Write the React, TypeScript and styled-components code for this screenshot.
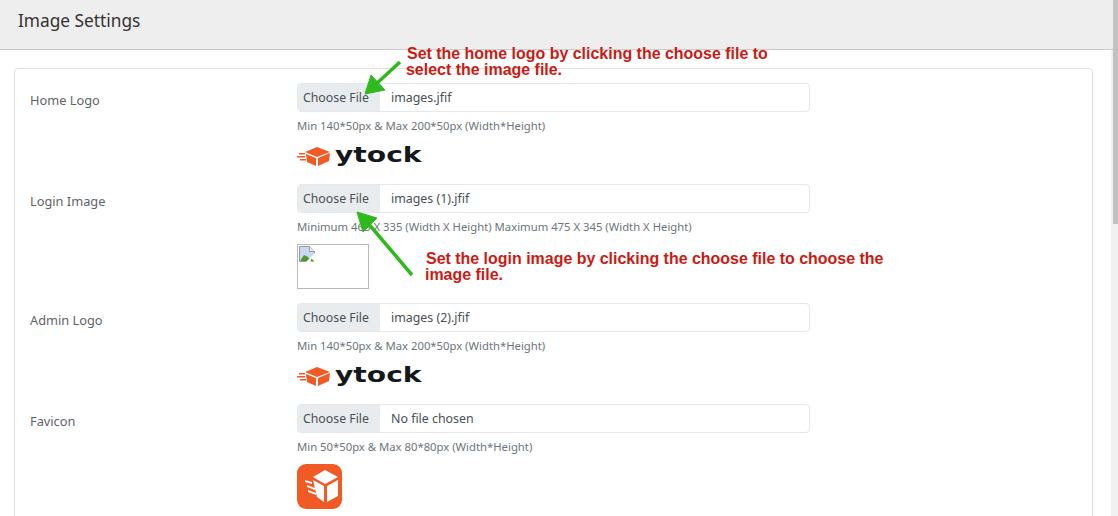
import styled, { createGlobalStyle } from "styled-components";

const GlobalStyle = createGlobalStyle`
  html, body {
    margin: 0;
    padding: 0;
    height: 100%;
    overflow: hidden;
    background: #f1f1f1;
    font-family: "Noto Sans", "Open Sans", sans-serif;
  }
`;

const Page = styled.div`
  position: relative;
  height: 516px;
  overflow: hidden;
  background: #f1f1f1;
`;

const ScrollThumb = styled.div`
  position: absolute;
  top: 0;
  right: 0;
  width: 5px;
  height: 224px;
  background: #c1c1c1;
`;

const Header = styled.header`
  height: 49px;
  display: flex;
  align-items: center;
  margin-right: 5px;
  padding: 0 0 8px 18px;
  box-sizing: border-box;
  background: #eeeeee;
  box-shadow: 0 1px 0 #cccccc;
`;

const Title = styled.h1`
  margin: 0;
  font-size: 17.3px;
  font-weight: 400;
  line-height: 22px;
  color: #333333;
`;

const Body = styled.main`
  margin-top: 1px;
  margin-right: 7px;
  padding: 18px 18px 18px 14px;
  height: 1100px;
  background: #ffffff;
`;

const Card = styled.section`
  box-sizing: border-box;
  height: 100%;
  padding: 14px 15px;
  background: #ffffff;
  border: 1px solid #dfdfdf;
  border-radius: 4px;
`;

const Row = styled.div`
  display: grid;
  grid-template-columns: 267px 513px;
  padding-bottom: 14px;
`;

const FieldLabel = styled.label`
  padding-top: 6.5px;
  font-size: 12.8px;
  line-height: 20px;
  color: #5f6468;
`;

const FileField = styled.div`
  box-sizing: border-box;
  display: flex;
  align-items: center;
  height: 29px;
  border: 1px solid #e6e8ea;
  border-radius: 4px;
  overflow: hidden;
`;

const ChooseButton = styled.span`
  align-self: stretch;
  display: flex;
  align-items: center;
  width: 83px;
  box-sizing: border-box;
  padding-left: 6px;
  margin: -1px 0 -1px -1px;
  background: #e9ecef;
  font-size: 12.3px;
  color: #495057;
`;

const FileName = styled.span`
  padding-left: 11px;
  font-size: 12.4px;
  color: #495057;
`;

const Hint = styled.p`
  margin: 0;
  height: 31px;
  padding-top: 7px;
  box-sizing: border-box;
  font-size: 11.3px;
  line-height: 14px;
  color: #6c757d;
  white-space: nowrap;
`;

const LogoWrap = styled.div`
  display: flex;
  align-items: flex-start;
  height: 27px;
  padding-top: 3px;
  box-sizing: border-box;
`;

const LogoText = styled.span`
  display: inline-block;
  margin: -5px 0 0 4px;
  font-family: "DejaVu Sans", sans-serif;
  font-size: 22px;
  font-weight: 700;
  line-height: 28px;
  color: #15181b;
  transform: scaleX(1.28);
  transform-origin: left center;
`;

const BrokenFrame = styled.div`
  box-sizing: border-box;
  width: 72px;
  height: 45px;
  padding: 1px 0 0 1px;
  border: 1px solid #b9b9b9;
  line-height: 0;
`;

const FaviconBox = styled.div`
  width: 45px;
  height: 45px;
  background: #f15a25;
  border-radius: 9px;
  line-height: 0;
`;

const Callout = styled.div<{ $left: number; $top: number }>`
  position: absolute;
  left: ${(p) => p.$left}px;
  top: ${(p) => p.$top}px;
  font-family: "Liberation Sans", Arial, sans-serif;
  font-size: 15.96px;
  font-weight: 700;
  line-height: 15.5px;
  color: #cc1a12;
  white-space: nowrap;
`;

const SecondLine = styled.span`
  display: block;
  margin-left: -1px;
`;

const ArrowLayer = styled.svg`
  position: absolute;
  left: 0;
  top: 0;
  width: 1118px;
  height: 516px;
  pointer-events: none;
`;

function Cube() {
  return (
    <svg width="34" height="21" viewBox="0 0 34 21">
      <g fill="#f15a25">
        <polygon points="20,1 33,6 20,11 8,6" />
        <polygon points="9,8 19,12 19,20 10,16" />
        <polygon points="21,12 33,7 32,15 21,20" />
        <rect x="2" y="7" width="6" height="1.5" />
        <rect x="0" y="10" width="8" height="1.5" />
        <rect x="3" y="13" width="6" height="1.5" />
      </g>
    </svg>
  );
}

function LogoImage() {
  return (
    <LogoWrap>
      <Cube />
      <LogoText>ytock</LogoText>
    </LogoWrap>
  );
}

function BrokenIcon() {
  return (
    <svg width="16" height="16" viewBox="0 0 16 16">
      <path d="M.5.5h10l5 5v10H.5z" fill="#c9d8f5" stroke="#9a9a9a" />
      <path d="M10.5.5v5h5" fill="#eeeeee" stroke="#9a9a9a" />
      <path d="M1 15l4-6 4 2 3 4z" fill="#4c9a2a" />
      <path d="M16 7L7 16h9z" fill="#ffffff" />
      <path d="M12.5 12.5l3 3h-4z" fill="#4c9a2a" />
    </svg>
  );
}

function FaviconImage() {
  return (
    <FaviconBox>
      <svg width="45" height="45" viewBox="0 0 45 45">
        <g fill="#ffffff">
          <polygon points="28,6 41,13 28,20 16,13" />
          <polygon points="16,16 27,22 27,38 20,33" />
          <polygon points="30,22 41,16 41,32 30,38" />
          <polygon points="8,16 15,18 15,20 8,18" />
          <polygon points="10,21 18,24 18,26 10,23" />
          <polygon points="11,26 19,29 19,31 11,28" />
        </g>
      </svg>
    </FaviconBox>
  );
}

type Field = {
  label: string;
  file: string;
  hint: string;
  preview: React.ReactNode;
};

const fields: Field[] = [
  {
    label: "Home Logo",
    file: "images.jfif",
    hint: "Min 140*50px & Max 200*50px (Width*Height)",
    preview: <LogoImage />,
  },
  {
    label: "Login Image",
    file: "images (1).jfif",
    hint: "Minimum 465 X 335 (Width X Height) Maximum 475 X 345 (Width X Height)",
    preview: (
      <BrokenFrame>
        <BrokenIcon />
      </BrokenFrame>
    ),
  },
  {
    label: "Admin Logo",
    file: "images (2).jfif",
    hint: "Min 140*50px & Max 200*50px (Width*Height)",
    preview: <LogoImage />,
  },
  {
    label: "Favicon",
    file: "No file chosen",
    hint: "Min 50*50px & Max 80*80px (Width*Height)",
    preview: <FaviconImage />,
  },
];

export default function App() {
  return (
    <>
      <GlobalStyle />
      <Page>
        <Header>
          <Title>Image Settings</Title>
        </Header>
        <Body>
          <Card>
            {fields.map((field) => (
              <Row key={field.label}>
                <FieldLabel>{field.label}</FieldLabel>
                <div>
                  <FileField>
                    <ChooseButton>Choose File</ChooseButton>
                    <FileName>{field.file}</FileName>
                  </FileField>
                  <Hint>{field.hint}</Hint>
                  {field.preview}
                </div>
              </Row>
            ))}
          </Card>
        </Body>

        <ScrollThumb />

        <ArrowLayer viewBox="0 0 1118 516">
          <g fill="#2eb91c" stroke="#2eb91c">
            <line x1="400" y1="62" x2="375" y2="85" strokeWidth="3.5" />
            <polygon points="365,94 371,75 385,90" strokeWidth="1" />
            <line x1="412" y1="275" x2="367" y2="222" strokeWidth="3.5" />
            <polygon points="357,212 377,218 363,232" strokeWidth="1" />
          </g>
        </ArrowLayer>

        <Callout $left={407} $top={46}>
          Set the home logo by clicking the choose file to
          <SecondLine>select the image file.</SecondLine>
        </Callout>
        <Callout $left={426} $top={251}>
          Set the login image by clicking the choose file to choose the
          <SecondLine>image file.</SecondLine>
        </Callout>
      </Page>
    </>
  );
}
